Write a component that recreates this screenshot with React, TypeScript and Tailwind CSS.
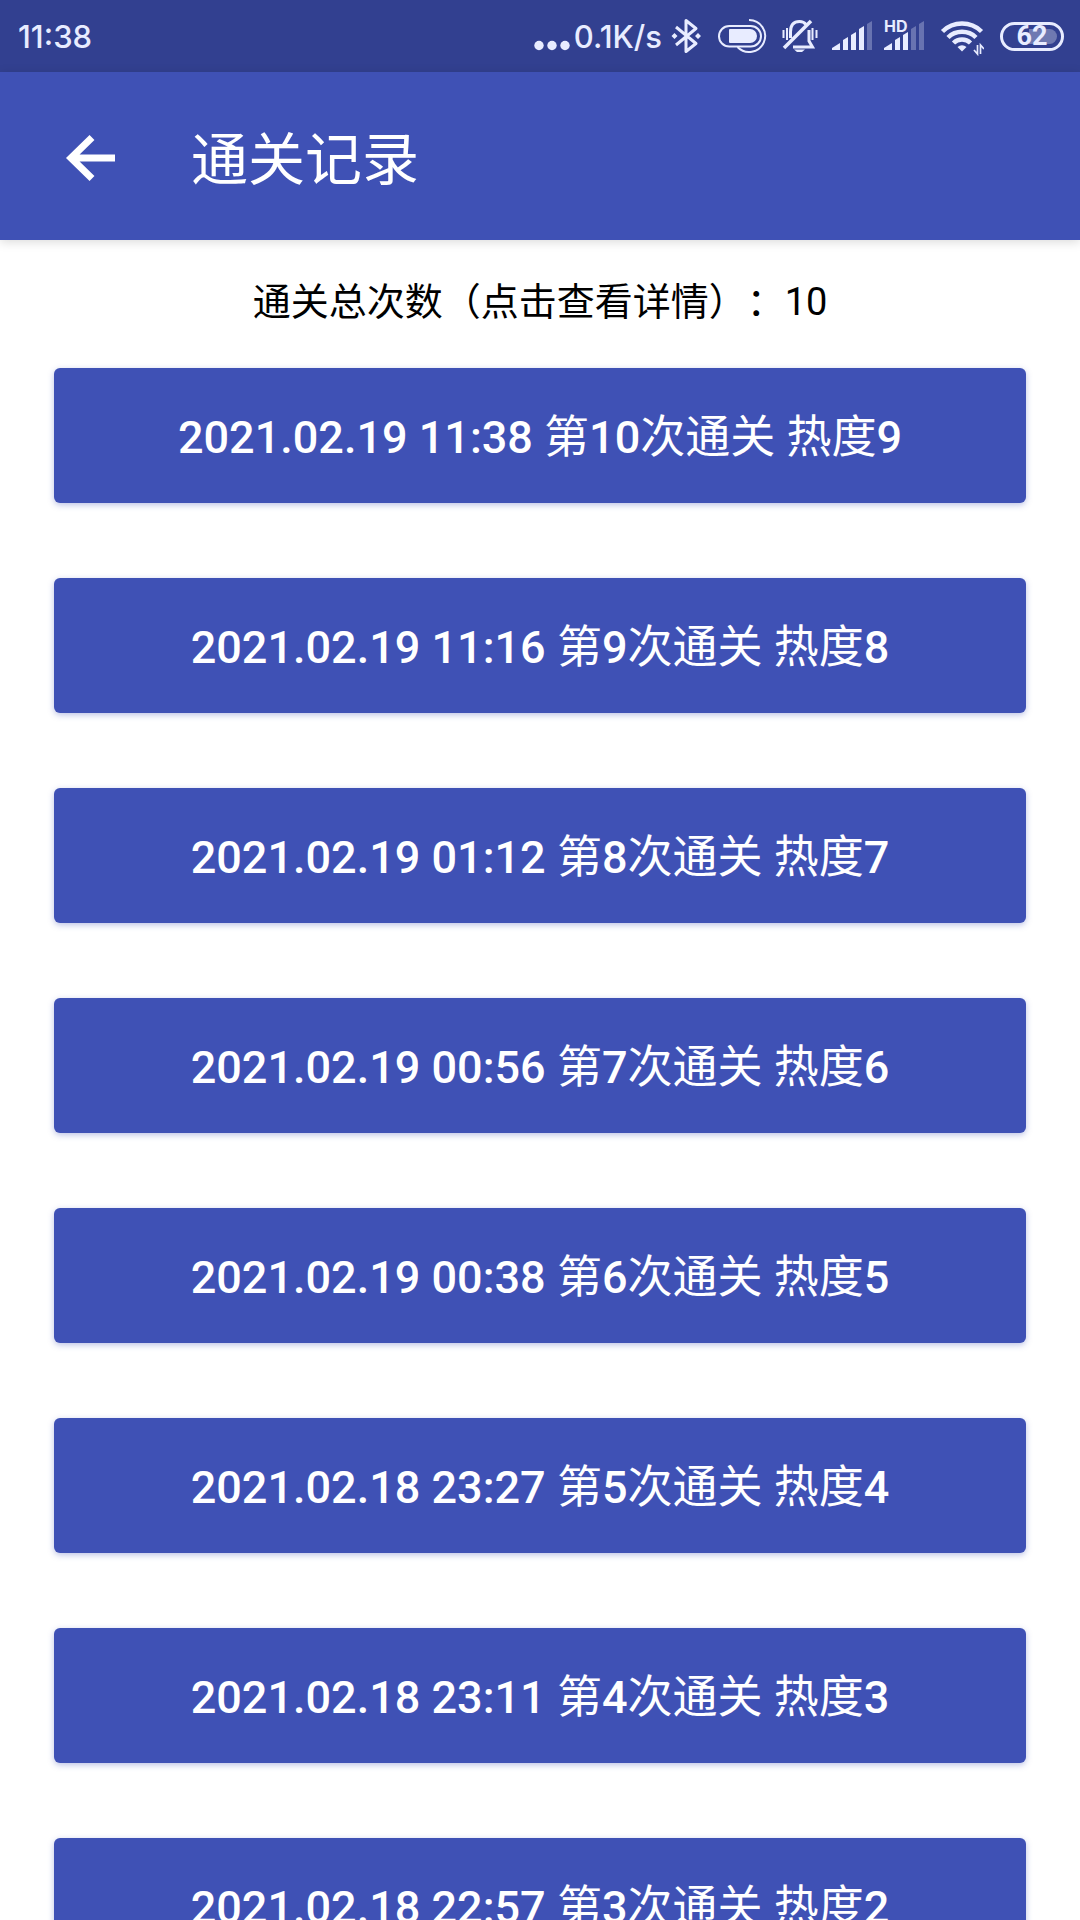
type ClearRecord = {
  time: string
  round: number
  heat: number
}

const TOTAL = 10

const records: ClearRecord[] = [
  { time: '2021.02.19 11:38', round: 10, heat: 9 },
  { time: '2021.02.19 11:16', round: 9, heat: 8 },
  { time: '2021.02.19 01:12', round: 8, heat: 7 },
  { time: '2021.02.19 00:56', round: 7, heat: 6 },
  { time: '2021.02.19 00:38', round: 6, heat: 5 },
  { time: '2021.02.18 23:27', round: 5, heat: 4 },
  { time: '2021.02.18 23:11', round: 4, heat: 3 },
  { time: '2021.02.18 22:57', round: 3, heat: 2 },
]

function DotsIcon() {
  return (
    <svg className="w-9 h-10" viewBox="0 0 36 40" fill="currentColor" aria-hidden="true">
      <circle cx="5" cy="29.500" r="4.700" />
      <circle cx="18" cy="29.500" r="4.700" />
      <circle cx="31" cy="29.500" r="4.700" />
    </svg>
  )
}

function BluetoothIcon() {
  return (
    <svg className="w-8 h-10" viewBox="0 0 32 40" fill="none" stroke="currentColor" strokeWidth="3" strokeLinejoin="round" aria-hidden="true">
      <path d="M6 11 26 27.500 16 35.500V4.500l10 8L6 29" />
      <path d="m4.500 17 3 3-3 3-3-3ZM28 17l3 3-3 3-3-3Z" fill="currentColor" stroke="none" />
    </svg>
  )
}

function PowerIcon() {
  return (
    <svg className="w-[50px] h-10" viewBox="0 0 50 40" fill="none" stroke="currentColor" strokeWidth="2" aria-hidden="true">
      <rect x="1" y="10" width="42" height="20.500" rx="10.250" />
      <path d="M12 13h20a7 7 0 0 1 0 14H12a1 1 0 0 1-1-1V14a1 1 0 0 1 1-1Z" fill="currentColor" stroke="none" />
      <path d="M31 4a16 16 0 1 1-11.500 27" />
    </svg>
  )
}

function MutedBellIcon() {
  return (
    <svg className="w-9 h-10" viewBox="0 0 36 40" fill="none" stroke="currentColor" strokeWidth="3" aria-hidden="true">
      <path d="M8.500 22v-6C8.500 9 12 5.500 17.500 5.500c3 0 5 1 6.500 3M27 14v11l3.500 6H11" />
      <path d="M29 5 2 32" strokeWidth="3.500" />
      <path d="M12 33.500h11l-3 2.500h-5Z" fill="currentColor" stroke="none" />
      <path d="M1.500 14v8M5 12v12M30.500 12v12M34.500 14v8" strokeWidth="2" />
    </svg>
  )
}

function SignalIcon({ bars, hd = false }: { bars: number; hd?: boolean }) {
  const paths = [
    'M0 34v-2l8-5v7Z',
    'M11 34V24l5-3v13Z',
    'M19 34V19l5-3v18Z',
    'M27 34V13l5-3v24Z',
    'M35 34V8l5-3v29Z',
  ]
  return (
    <span className="relative block">
      <svg className="w-10 h-10" viewBox="0 0 40 40" fill="currentColor" aria-hidden="true">
        {paths.map((d, i) => (
          <path key={d} d={d} opacity={i < bars ? 1 : 0.3} />
        ))}
      </svg>
      {hd && <span className="absolute left-0 top-0 text-base leading-5 font-bold">HD</span>}
    </span>
  )
}

function WifiIcon() {
  return (
    <svg className="w-11 h-10" viewBox="0 0 44 40" fill="none" stroke="currentColor" strokeWidth="4.500" aria-hidden="true">
      <path d="M2.500 15.500a28 28 0 0 1 39 0" />
      <path d="M8 21.500a20 20 0 0 1 28 0" />
      <path d="M13.500 27a12 12 0 0 1 17 0" />
      <path d="M22 35.500l-4.500-4.500a7 7 0 0 1 9 0Z" fill="currentColor" stroke="none" />
      <path d="M37.500 29v9l-3.500-4M40.500 38v-9l3.500 4" strokeWidth="1.700" />
    </svg>
  )
}

function StatusBar() {
  return (
    <div className="flex items-center h-[72px] shrink-0 pl-[18px] pr-4 bg-[#324090] text-[#e8ecff] font-['Inter',sans-serif] text-[31px] font-medium">
      <span className="pt-0.5">11:38</span>
      <div className="ml-auto flex items-center">
        <DotsIcon />
        <span className="ml-1 pt-0.5">0.1K/s</span>
        <span className="ml-2"><BluetoothIcon /></span>
        <span className="ml-4"><PowerIcon /></span>
        <span className="ml-3.5"><MutedBellIcon /></span>
        <span className="ml-3.5"><SignalIcon bars={4} /></span>
        <span className="ml-3"><SignalIcon bars={3} hd /></span>
        <span className="ml-4"><WifiIcon /></span>
        <span className="relative ml-4 flex items-center justify-center w-16 h-[29px] rounded-full border-3 border-current font-['Roboto',sans-serif] text-[27px] leading-6 font-bold">
          <span className="absolute right-1 inset-y-1 w-7 rounded-r-full bg-white/30" />
          <span className="relative">62</span>
        </span>
      </div>
    </div>
  )
}

function RecordButton({ record }: { record: ClearRecord }) {
  // Only the digits are bold, the Chinese text stays at normal weight
  return (
    <button
      type="button"
      className="w-full h-[135px] pt-1 rounded-md bg-[#3f51b5] text-white text-[45px] whitespace-pre shadow-[0_2px_6px_rgba(63,81,181,0.35)]"
    >
      <b className="font-medium">{record.time} </b>
      第<b className="font-medium">{record.round}</b>次通关
      <b className="font-medium"> </b>热度<b className="font-medium">{record.heat}</b>
    </button>
  )
}

export default function App() {
  return (
    <div className="flex flex-col h-screen bg-white font-['Roboto','Noto_Sans_CJK_SC',sans-serif]" lang="zh-CN">
      <StatusBar />

      {/* App bar */}
      <header className="relative flex items-center h-[168px] shrink-0 px-[66px] pt-2.5 bg-[#3f51b5] text-white shadow-[0_2px_10px_rgba(0,0,0,0.15)]">
        <button type="button" aria-label="返回">
          <svg className="w-[50px] h-12 overflow-visible" viewBox="0 0 50 48" fill="none" stroke="currentColor" strokeWidth="7" aria-hidden="true">
            <path d="M49 21H6M26 0.500 5 21l21 20.500" />
          </svg>
        </button>
        <h1 className="ml-[75px] text-[57px] leading-[72px]">通关记录</h1>
      </header>

      {/* Record list */}
      <main className="flex-1 min-h-0 overflow-y-auto px-[54px] [scrollbar-width:none]">
        <p className="pt-[34px] pb-[38px] text-center text-[38px] leading-14 text-black [text-spacing-trim:space-all]">
          通关总次数（点击查看详情）：{TOTAL}
        </p>
        <ul className="flex flex-col gap-[75px] pb-10">
          {records.map(r => (
            <li key={r.round}><RecordButton record={r} /></li>
          ))}
        </ul>
      </main>
    </div>
  )
}
